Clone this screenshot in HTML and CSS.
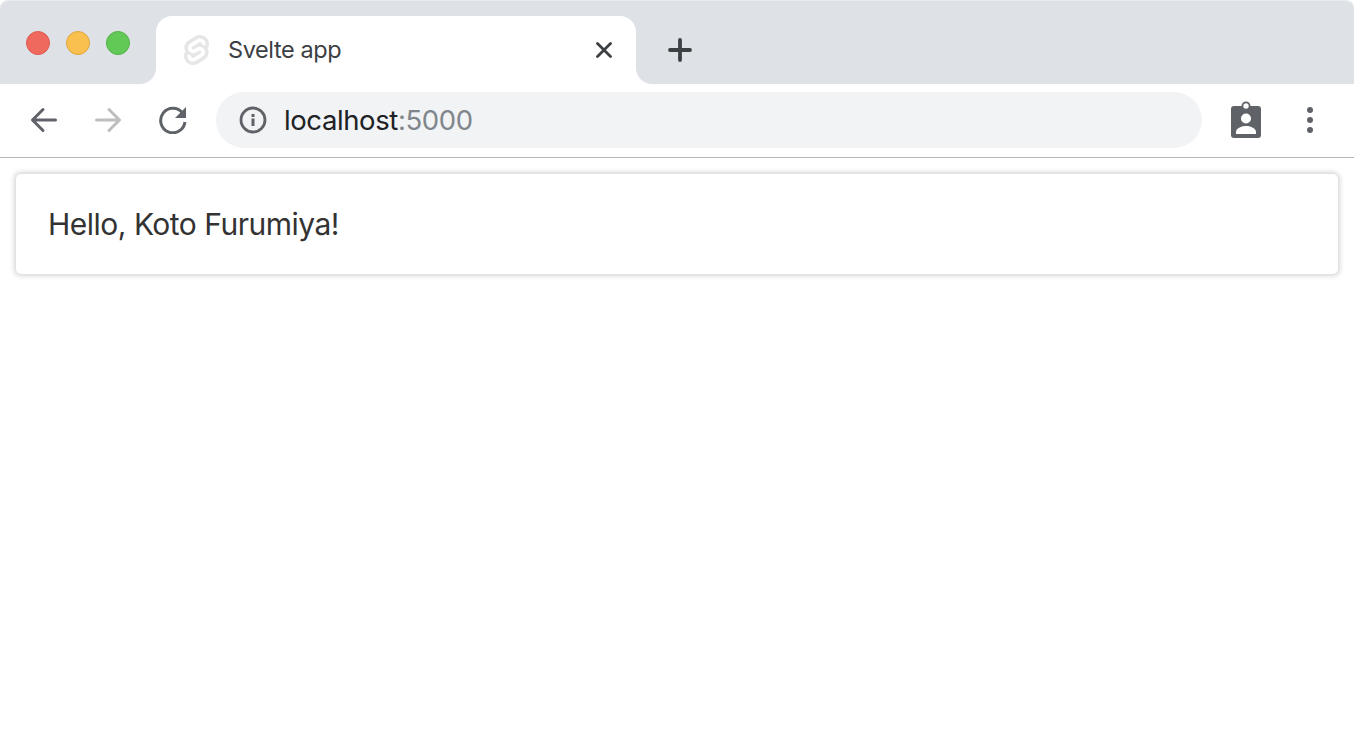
FILE: index.html
```html
<!DOCTYPE html>
<html lang="en">
<head>
<meta charset="utf-8">
<title>Svelte app</title>
<link rel="stylesheet" href="styles.css">
</head>
<body>
<header class="chrome">
  <div class="tabstrip">
    <div class="traffic">
      <span class="light red"></span>
      <span class="light yellow"></span>
      <span class="light green"></span>
    </div>
    <div class="tabwrap">
      <div class="tab">
        <svg class="favicon" width="25" height="30" viewBox="0 0 98.100 118">
          <path fill="#e6e6e6" d="M91.800 15.600C80.900-.1 59.200-4.700 43.600 5.200L16.100 22.800C8.600 27.500 3.400 35.200 1.900 43.900c-1.300 7.300-.2 14.800 3.300 21.300-2.400 3.600-4 7.600-4.700 11.800-1.600 8.900.5 18.100 5.700 25.400 11 15.700 32.600 20.300 48.200 10.400l27.500-17.500c7.500-4.700 12.700-12.400 14.200-21.100 1.300-7.300.2-14.800-3.300-21.300 2.400-3.600 4-7.600 4.700-11.800 1.700-9-.4-18.200-5.700-25.500"/>
          <path fill="#fff" d="M40.900 103.900c-8.900 2.300-18.200-1.200-23.400-8.700-3.200-4.400-4.400-9.900-3.500-15.300.2-.9.400-1.700.6-2.600l.5-1.600 1.400 1c3.300 2.400 6.900 4.200 10.800 5.400l1 .3-.1 1c-.1 1.400.3 2.900 1.100 4.100 1.600 2.300 4.400 3.400 7.100 2.700.6-.2 1.200-.4 1.700-.7L65.500 72c1.400-.9 2.300-2.200 2.600-3.800.3-1.600-.1-3.300-1-4.600-1.600-2.300-4.400-3.300-7.100-2.600-.6.2-1.200.4-1.700.7l-10.500 6.700c-1.700 1.100-3.600 1.900-5.600 2.400-8.900 2.300-18.200-1.200-23.400-8.700-3.100-4.400-4.400-9.900-3.400-15.300.9-5.200 4.100-9.900 8.600-12.700l27.500-17.500c1.700-1.100 3.600-1.900 5.600-2.500 8.900-2.300 18.200 1.200 23.400 8.700 3.200 4.400 4.400 9.900 3.500 15.300-.2.900-.4 1.700-.7 2.600l-.5 1.600-1.400-1c-3.300-2.400-6.900-4.200-10.800-5.400l-1-.3.100-1c.1-1.400-.3-2.900-1.100-4.100-1.600-2.300-4.400-3.300-7.100-2.600-.6.2-1.200.4-1.700.7L32.400 46.100c-1.400.9-2.300 2.200-2.600 3.800s.1 3.300 1 4.600c1.600 2.300 4.400 3.300 7.100 2.600.6-.2 1.200-.4 1.700-.7l10.500-6.700c1.700-1.100 3.600-1.900 5.600-2.500 8.900-2.300 18.200 1.200 23.400 8.700 3.200 4.400 4.400 9.900 3.500 15.300-.9 5.200-4.100 9.900-8.600 12.700l-27.500 17.500c-1.700 1.100-3.600 1.900-5.600 2.500"/>
        </svg>
        <span class="tab-title">Svelte app</span>
        <svg class="tab-close" width="16" height="16" viewBox="0 0 16 16" stroke="#3c4043" stroke-width="2.800" stroke-linecap="round"><path d="M1.500 1.500 14.500 14.500M14.500 1.500 1.500 14.500"/></svg>
      </div>
    </div>
    <div class="newtab">
      <svg width="24" height="24" viewBox="0 0 24 24" stroke="#3c4043" stroke-width="3.800" stroke-linecap="round"><path d="M12 2V22M2 12H22"/></svg>
    </div>
  </div>
  <div class="toolbar">
    <svg class="nav back" width="28" height="26" viewBox="0 0 28 26" fill="none" stroke="#5f6368" stroke-width="3" stroke-linecap="round" stroke-linejoin="round"><path d="M25.500 13H3M13 2.500 2.500 13 13 23.500"/></svg>
    <svg class="nav forward" width="28" height="26" viewBox="0 0 28 26" fill="none" stroke="#bdbebf" stroke-width="3" stroke-linecap="round" stroke-linejoin="round"><path d="M2.500 13H25M15 2.500 25.500 13 15 23.500"/></svg>
    <svg class="nav reload" width="28" height="28" viewBox="0 0 28 28"><path d="M23.500 7A12.200 12.200 0 1 0 26 16" fill="none" stroke="#5f6368" stroke-width="3"/><path d="M27 1v11H16z" fill="#5f6368"/></svg>
    <div class="omnibox">
      <svg class="info" width="28" height="28" viewBox="0 0 28 28"><circle cx="14" cy="14" r="12" fill="none" stroke="#5f6368" stroke-width="2.800"/><rect x="12.500" y="12.500" width="3" height="7.500" fill="#5f6368"/><rect x="12.500" y="8" width="3" height="3" fill="#5f6368"/></svg>
      <span class="url">localhost<span class="port">:5000</span></span>
    </div>
    <svg class="profile" width="30" height="37" viewBox="0 0 30 37">
      <path fill="#5f6368" d="M3 5h24a3 3 0 0 1 3 3v26a3 3 0 0 1-3 3H3a3 3 0 0 1-3-3V8a3 3 0 0 1 3-3z"/>
      <circle cx="15" cy="5" r="3.600" fill="#fff" stroke="#5f6368" stroke-width="1.800"/>
      <circle cx="15" cy="17.500" r="5" fill="#fff"/>
      <path fill="#fff" d="M5 33v-2.200c0-3.800 6.500-5.800 10-5.800s10 2 10 5.800V33z"/>
    </svg>
    <div class="menu"><span></span><span></span><span></span></div>
  </div>
</header>
<main class="page">
  <div class="card">Hello, Koto Furumiya!</div>
</main>
</body>
</html>
```

FILE: styles.css
```css
* { box-sizing: border-box; }

html, body {
  margin: 0;
  height: 100%;
  background: #fff;
  overflow: hidden;
}

body {
  font-family: Inter, "Liberation Sans", sans-serif;
}

.chrome {
  border-bottom: 1px solid #b6b6b6;
}

.tabstrip {
  display: flex;
  height: 84px;
  background: #fff;
  border-top: 1px solid #e9ebee;
  border-radius: 8px 8px 0 0;
  overflow: hidden;
}

.traffic {
  width: 156px;
  flex: none;
  display: flex;
  gap: 16px;
  padding: 30px 0 0 26px;
  background: #dee1e6;
  border-bottom-right-radius: 16px;
}

.light {
  width: 24px;
  height: 24px;
  border-radius: 50%;
  border: 1px solid;
}

.red { background: #f0695f; border-color: #dc5a50; }
.yellow { background: #f9c04f; border-color: #dfa53c; }
.green { background: #62c956; border-color: #52b247; }

.tabwrap {
  width: 480px;
  flex: none;
  padding-top: 15px;
  background: #dee1e6;
}

.tab {
  height: 68px;
  display: flex;
  align-items: center;
  padding: 0 24px 0 28px;
  background: #fff;
  border-radius: 16px 16px 0 0;
}

.favicon {
  flex: none;
}

.tab-title {
  flex: 1;
  margin: 0 0 2px 19px;
  font-size: 23.500px;
  letter-spacing: -0.400px;
  color: #3c4043;
}

.newtab {
  flex: 1;
  padding: 37px 0 0 32px;
  background: #dee1e6;
  border-bottom-left-radius: 16px;
}

.newtab svg, .tab-close, .nav, .info, .profile { display: block; flex: none; }

.toolbar {
  height: 73px;
  display: flex;
  align-items: center;
  padding: 0 0 2px 30px;
}

.nav.forward { margin-left: 36px; }
.nav.reload { margin-left: 37px; }

.omnibox {
  width: 986px;
  height: 56px;
  margin: 0 0 0 29px;
  display: flex;
  align-items: center;
  padding-left: 23px;
  background: #f1f3f4;
  border-radius: 28px;
}

.url {
  margin-left: 17px;
  font-size: 27.500px;
  letter-spacing: -0.400px;
  color: #202124;
}

.port { color: #80868b; }

.profile { margin-left: 29px; }

.menu {
  margin-left: 46px;
  display: flex;
  flex-direction: column;
  gap: 4px;
}

.menu span {
  width: 6px;
  height: 6px;
  border-radius: 50%;
  background: #5f6368;
}

.page {
  padding: 16px 16px 0;
}

.card {
  height: 100px;
  display: flex;
  align-items: center;
  padding: 0 33px 0 32px;
  background: #fff;
  border-radius: 5px;
  box-shadow: 0 0 5px 2px rgba(0, 0, 0, 0.16);
  font-size: 30px;
  letter-spacing: -0.500px;
  color: #333;
}
```
